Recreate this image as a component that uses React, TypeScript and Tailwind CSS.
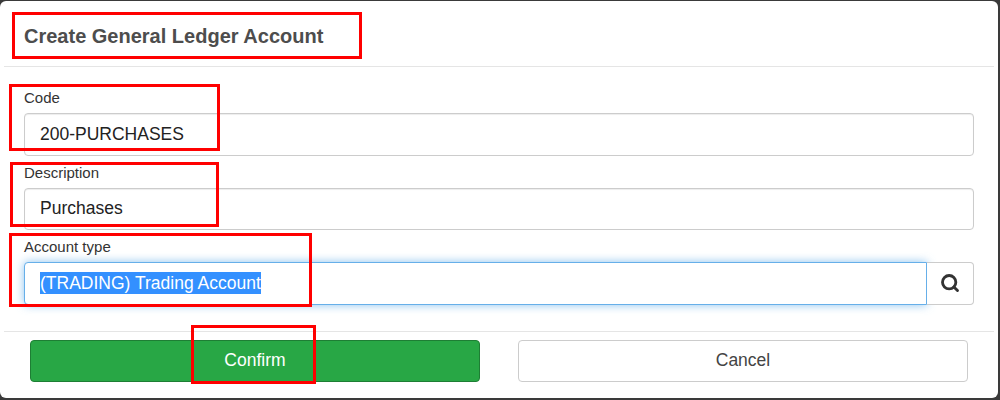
import React from 'react'
import { Search } from 'lucide-react'

const font = "font-['Liberation_Sans',Arial,sans-serif]"

const Field: React.FC<{ label: string; value: string; top: string }> = ({ label, value, top }) => (
  <div className={top}>
    <label className="block h-[24px] text-[15px] leading-[17px] text-[#333]">{label}</label>
    <div className="flex h-[42.5px] items-center rounded-[4px] border border-[#ccc] bg-white px-[15px] pb-[1px] text-[17.5px] text-[#222] shadow-[inset_0_1px_1px_rgba(0,0,0,0.075)]">
      {value}
    </div>
  </div>
)

// red annotation boxes that sit on top of the screenshot
const Mark: React.FC<{ className: string }> = ({ className }) => (
  <div className={`pointer-events-none absolute border-[3px] border-[#f00] ${className}`} />
)

export default function App() {
  return (
    <div className={`relative h-[400px] w-[1000px] overflow-hidden bg-[#3a3a3a] pt-[1px] pr-[2px] pb-[2px] ${font}`}>
      <div className="h-[397px] rounded-[6px] bg-white pl-[4px] pr-[4px]">
        {/* Header */}
        <div className="flex h-[66px] items-center border-b border-[#e5e5e5] pl-[20px] pt-[4px]">
          <h4 className="text-[20px] font-bold leading-[24px] text-[#4d4d4d]">Create General Ledger Account</h4>
        </div>

        {/* Body */}
        <div className="h-[264px] pl-[20px] pr-[20px]">
          <Field label="Code" value="200-PURCHASES" top="pt-[22px]" />
          <Field label="Description" value="Purchases" top="pt-[8px]" />
          <div className="pt-[8px]">
            <label className="block h-[24px] text-[15px] leading-[17px] text-[#333]">Account type</label>
            <div className="flex h-[42.5px]">
              <div className="flex flex-1 items-center rounded-l-[4px] border border-[#66afe9] bg-white px-[15px] text-[17.5px] shadow-[0_0_10px_rgba(102,175,233,0.75)]">
                <span className="inline-block bg-[#3390ff] leading-[22px] text-white">(TRADING) Trading Account</span>
              </div>
              <div className="flex w-[47px] items-center justify-center rounded-r-[4px] border border-l-0 border-[#ccc] bg-white text-[#333]">
                <Search size={20} strokeWidth={3.4} />
              </div>
            </div>
          </div>
        </div>

        {/* Footer */}
        <div className="flex justify-between border-t border-[#e5e5e5] pl-[26px] pr-[26px] pt-[8px]">
          <button className="h-[42px] w-[450px] rounded-[4px] border border-[#1e7e34] bg-[#28a745] pb-[2px] text-[17.5px] text-white">Confirm</button>
          <button className="h-[42px] w-[450px] rounded-[4px] border border-[#ccc] bg-white pb-[2px] text-[17.5px] text-[#444]">Cancel</button>
        </div>
      </div>

      <Mark className="left-[12px] top-[12px] h-[47px] w-[350px]" />
      <Mark className="left-[9px] top-[84px] h-[67px] w-[211px]" />
      <Mark className="left-[10px] top-[162px] h-[65px] w-[209px]" />
      <Mark className="left-[9px] top-[233px] h-[74px] w-[303px]" />
      <Mark className="left-[191px] top-[325px] h-[59px] w-[125px]" />
    </div>
  )
}
